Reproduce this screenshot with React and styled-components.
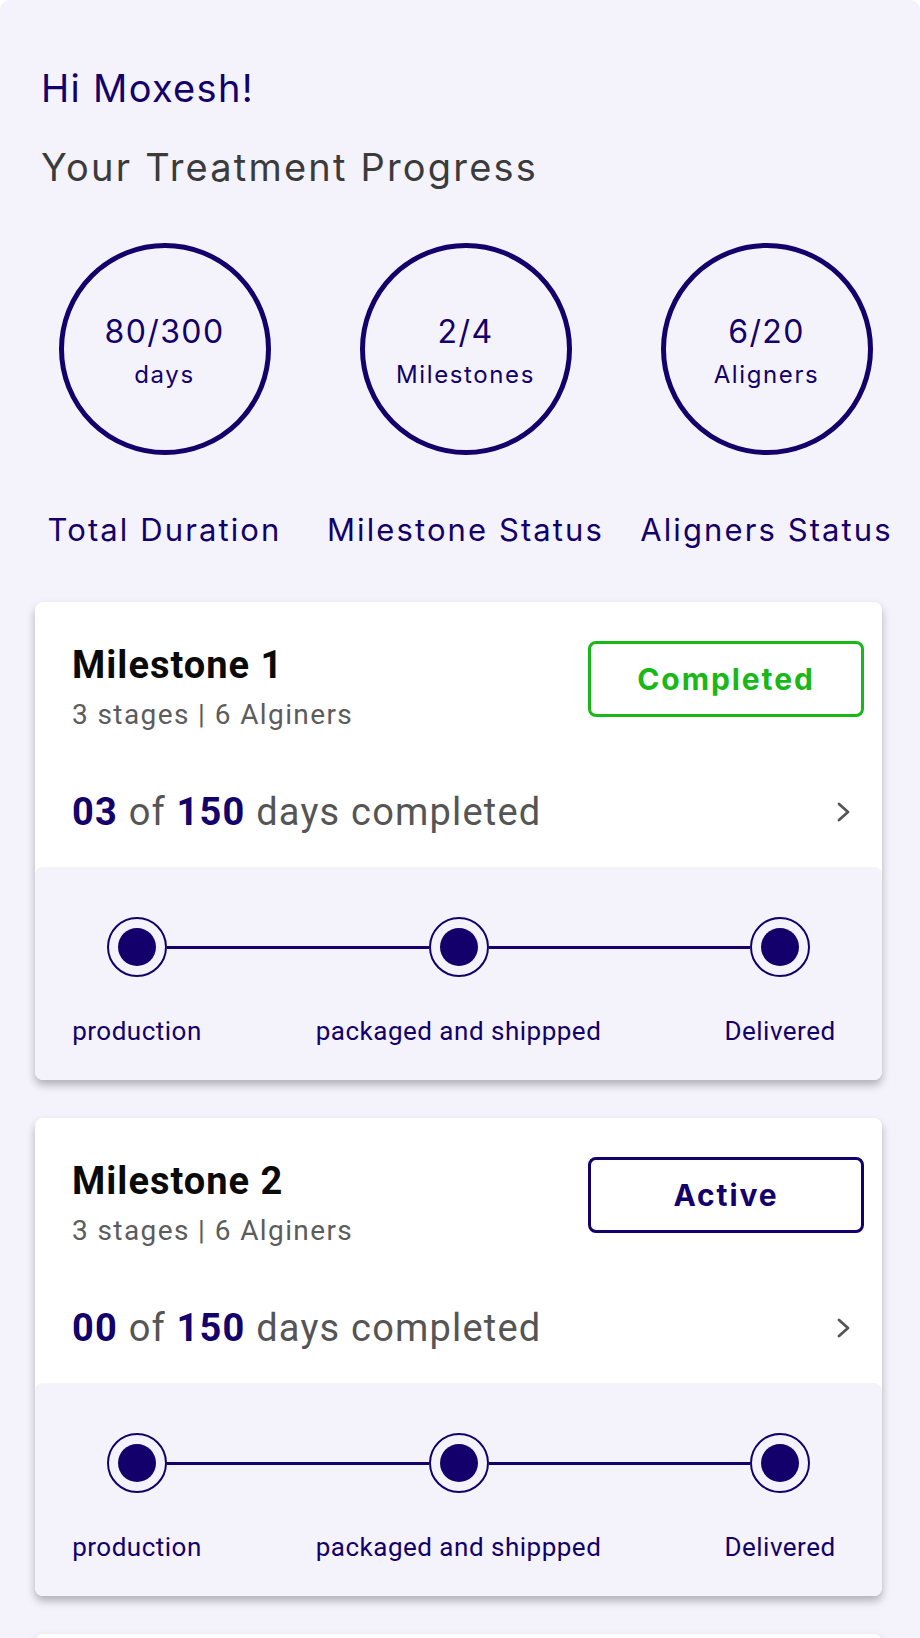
import React from 'react';
import styled, { createGlobalStyle } from 'styled-components';

const INDIGO = '#13006a';
const GREEN = '#17b817';

const GlobalStyle = createGlobalStyle`
  body {
    margin: 0;
    background: #ffffff;
  }
`;

const Root = styled.div`
  min-height: 100vh;
  background: #f4f3fc;
  border-radius: 10px;
  overflow: hidden;
  padding-top: 69px;
  box-sizing: border-box;
`;

const Intro = styled.div`
  padding-left: 41px;
  font-family: Inter, 'Open Sans', sans-serif;
`;

const Greeting = styled.div`
  font-size: 38px;
  line-height: 38px;
  letter-spacing: 1.3px;
  color: ${INDIGO};
`;

const Subtitle = styled.div`
  font-size: 38px;
  line-height: 38px;
  letter-spacing: 2.2px;
  color: #3b3b3b;
  margin-top: 41px;
`;

const Stats = styled.div`
  display: grid;
  grid-template-columns: repeat(3, 301px);
  padding-left: 14px;
  margin-top: 57px;
  font-family: Inter, 'Open Sans', sans-serif;
  color: ${INDIGO};
`;

const Stat = styled.div`
  display: flex;
  flex-direction: column;
  align-items: center;
`;

const Ring = styled.div`
  width: 212px;
  height: 212px;
  box-sizing: border-box;
  border: 5px solid ${INDIGO};
  border-radius: 50%;
  display: flex;
  flex-direction: column;
  align-items: center;
  justify-content: center;
  gap: 8px;
  padding-top: 4px;
`;

const RingValue = styled.div`
  font-size: 32px;
  line-height: 40px;
  letter-spacing: 1.4px;
`;

const RingUnit = styled.div`
  font-size: 24px;
  line-height: 30px;
  letter-spacing: 1.6px;
`;

const StatLabel = styled.div`
  margin-top: 59px;
  font-size: 31px;
  line-height: 32px;
  letter-spacing: 2.1px;
  white-space: nowrap;
`;

const Cards = styled.div`
  margin-top: 56px;
  padding: 0 38px 0 35px;
  display: flex;
  flex-direction: column;
  gap: 38px;
`;

const Card = styled.div`
  background: #ffffff;
  border-radius: 8px;
  box-shadow: 0 5px 8px rgba(0, 0, 0, 0.28);
  overflow: hidden;
  font-family: Roboto, 'Liberation Sans', sans-serif;
`;

const CardHead = styled.div`
  padding: 39px 18px 33px 37px;
`;

const TopRow = styled.div`
  display: flex;
  justify-content: space-between;
  align-items: flex-start;
`;

const Title = styled.div`
  margin-top: 2px;
  font-size: 38px;
  line-height: 44px;
  font-weight: 700;
  letter-spacing: 1px;
  color: #0a0a0a;
`;

const Meta = styled.div`
  margin-top: 12px;
  font-size: 28px;
  line-height: 32px;
  letter-spacing: 1.4px;
  color: #5c5c5c;
`;

const Badge = styled.div`
  width: 276px;
  height: 76px;
  box-sizing: border-box;
  border: 3px solid ${(p) => p.$color};
  border-radius: 8px;
  display: flex;
  align-items: center;
  justify-content: center;
  color: ${(p) => p.$color};
  font-family: Inter, 'Open Sans', sans-serif;
  font-weight: 700;
  font-size: 30px;
  letter-spacing: 1.9px;
`;

const ProgressRow = styled.div`
  margin-top: 59px;
  display: flex;
  align-items: center;
  justify-content: space-between;
  padding-right: 12px;
`;

const ProgressText = styled.div`
  font-size: 38px;
  line-height: 44px;
  letter-spacing: 1.2px;
  color: #555555;
`;

const Strong = styled.span`
  color: ${INDIGO};
  font-weight: 700;
`;

const StageArea = styled.div`
  background: #f4f3fc;
  border-radius: 8px;
  padding: 50px 72px 34px;
  display: flex;
  align-items: flex-start;
`;

const Stage = styled.div`
  width: 60px;
  display: flex;
  flex-direction: column;
  align-items: center;
`;

const Node = styled.div`
  width: 60px;
  height: 60px;
  box-sizing: border-box;
  border: 2px solid ${INDIGO};
  border-radius: 50%;
  display: flex;
  align-items: center;
  justify-content: center;

  &::after {
    content: '';
    width: 38px;
    height: 38px;
    border-radius: 50%;
    background: ${INDIGO};
  }
`;

const Connector = styled.div`
  flex: 1;
  height: 3px;
  margin-top: 28.5px;
  background: ${INDIGO};
`;

const StageLabel = styled.div`
  margin-top: 39px;
  font-size: 26px;
  line-height: 30px;
  letter-spacing: 0.5px;
  color: ${INDIGO};
  white-space: nowrap;
`;

const Chevron = () => (
  <svg width="16" height="20" viewBox="0 0 16 20">
    <polyline
      points="3,2 12,10 3,18"
      fill="none"
      stroke="#555555"
      strokeWidth="2.8"
      strokeLinecap="round"
      strokeLinejoin="round"
    />
  </svg>
);

const stats = [
  { value: '80/300', unit: 'days', label: 'Total Duration' },
  { value: '2/4', unit: 'Milestones', label: 'Milestone Status' },
  { value: '6/20', unit: 'Aligners', label: 'Aligners Status' },
];

const milestones = [
  { title: 'Milestone 1', done: '03', status: 'Completed', color: GREEN },
  { title: 'Milestone 2', done: '00', status: 'Active', color: INDIGO },
  { title: 'Milestone 3', done: '00', status: 'Pending', color: INDIGO },
];

const stages = ['production', 'packaged and shippped', 'Delivered'];

const MilestoneCard = ({ title, done, status, color }) => (
  <Card>
    <CardHead>
      <TopRow>
        <div>
          <Title>{title}</Title>
          <Meta>3 stages | 6 Alginers</Meta>
        </div>
        <Badge $color={color}>{status}</Badge>
      </TopRow>
      <ProgressRow>
        <ProgressText>
          <Strong>{done}</Strong> of <Strong>150</Strong> days completed
        </ProgressText>
        <Chevron />
      </ProgressRow>
    </CardHead>
    <StageArea>
      {stages.map((s, i) => (
        <React.Fragment key={s}>
          {i > 0 && <Connector />}
          <Stage>
            <Node />
            <StageLabel>{s}</StageLabel>
          </Stage>
        </React.Fragment>
      ))}
    </StageArea>
  </Card>
);

export default function App() {
  return (
    <>
      <GlobalStyle />
      <Root>
        <Intro>
          <Greeting>Hi Moxesh!</Greeting>
          <Subtitle>Your Treatment Progress</Subtitle>
        </Intro>
        <Stats>
          {stats.map((s) => (
            <Stat key={s.label}>
              <Ring>
                <RingValue>{s.value}</RingValue>
                <RingUnit>{s.unit}</RingUnit>
              </Ring>
              <StatLabel>{s.label}</StatLabel>
            </Stat>
          ))}
        </Stats>
        <Cards>
          {milestones.map((m) => (
            <MilestoneCard key={m.title} {...m} />
          ))}
        </Cards>
      </Root>
    </>
  );
}
